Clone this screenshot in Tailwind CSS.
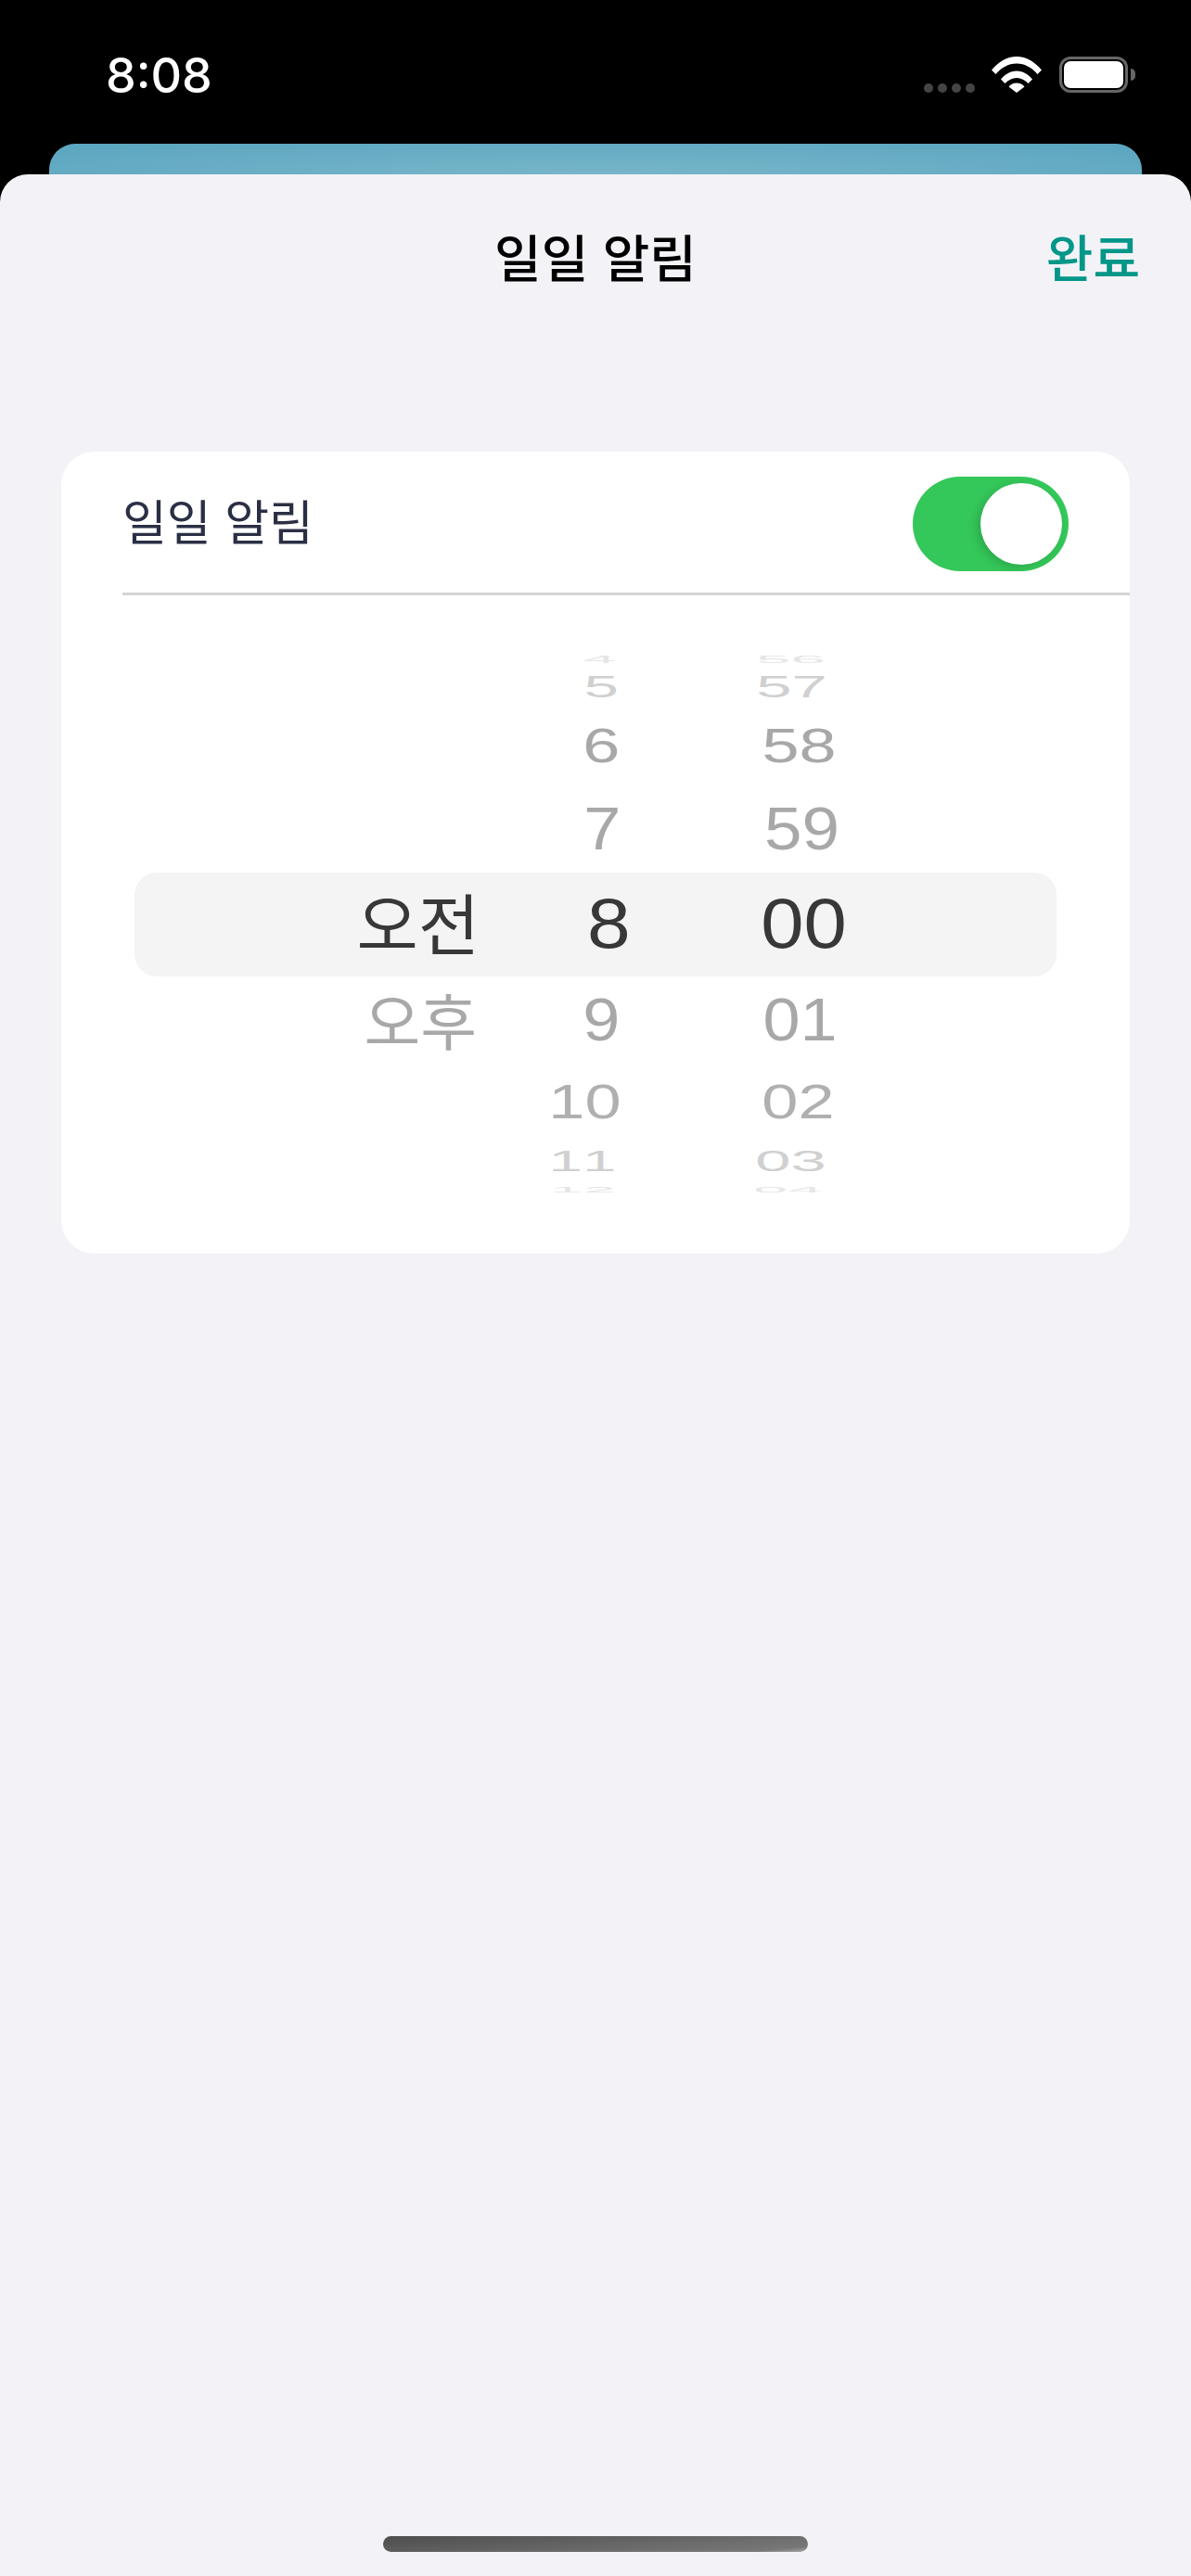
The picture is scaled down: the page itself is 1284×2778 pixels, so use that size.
<!DOCTYPE html>
<html lang="ko">
<head>
<meta charset="utf-8">
<script src="https://cdn.jsdelivr.net/npm/@tailwindcss/browser@4"></script>
</head>
<body class="bg-black">
<div class="w-[1284px] h-[2778px] bg-black flex flex-col overflow-hidden">
  <div class="h-[155px] flex items-start justify-between shrink-0">
    <span class="ml-[114px] mt-[51px] text-[52px] leading-[62px] font-medium text-white font-['Inter',sans-serif]">8:08</span>
    <div class="flex items-end mt-[61px] mr-[68px] h-[39px]">
      <div class="flex gap-[5px] mr-[18px]">
        <span class="w-[10px] h-[10px] rounded-full bg-[#444]"></span>
        <span class="w-[10px] h-[10px] rounded-full bg-[#444]"></span>
        <span class="w-[10px] h-[10px] rounded-full bg-[#444]"></span>
        <span class="w-[10px] h-[10px] rounded-full bg-[#444]"></span>
      </div>
      <svg class="mr-[19px] w-[54px] h-[39px]" viewBox="0 0 54 39" fill="#fff">
        <path d="M0 14.5C7 6 16.5 0 27 0s20 6 27 14.5l-4.5 4.5C43.500 12 36 7.500 27 7.500S10.500 12 4.500 19z"/>
        <path d="M10 24.500C14 19.500 20 15.500 27 15.500s13 4 17 9l-4.500 4.500C36 25.500 32 23 27 23s-9 2.500-12.500 6z"/>
        <path d="M18.500 32.500C20.500 30 23.500 28.500 27 28.500s6.500 1.500 8.500 4L27 39z"/>
      </svg>
      <div class="relative w-[74px] h-[39px] rounded-[12px] border-[3px] border-[#666] p-[2px]">
        <div class="w-full h-full bg-white rounded-[7px]"></div>
        <span class="absolute right-[-11px] top-[10px] w-[5px] h-[13px] bg-[#666] rounded-r-full"></span>
      </div>
    </div>
  </div>
  <div class="h-[33px] mx-[53px] shrink-0 rounded-t-[28px] bg-[radial-gradient(ellipse_at_center_bottom,#78b6c9,#5aa5c0)]"></div>
  <div class="relative flex-1 bg-[#f2f2f7] rounded-t-[30px] px-[66px] font-['Noto_Sans_CJK_KR',sans-serif]">
    <div class="absolute inset-x-0 top-[52px] flex justify-center">
      <span class="text-[55px] leading-[70px] font-medium text-black">일일 알림</span>
    </div>
    <span class="absolute right-[55px] top-[52px] text-[55px] leading-[70px] font-medium text-[#009688]">완료</span>
    <div class="mt-[299px] h-[865px] bg-white rounded-[36px] overflow-hidden relative">
      <div class="h-[155px] ml-[66px] border-b-[3px] border-[#d4d4d4] flex items-center justify-between pr-[66px]">
        <span class="text-[52px] leading-[64px] text-[#2a2f45] mb-[4px]">일일 알림</span>
        <div class="relative w-[168px] h-[102px] rounded-full bg-[#34c759] mt-[3px]">
          <span class="absolute right-[7px] top-[7px] w-[88px] h-[88px] rounded-full bg-white shadow-[-4px_3px_10px_rgba(0,0,0,0.15)]"></span>
        </div>
      </div>
      <div class="absolute left-[79px] top-[454px] w-[994px] h-[112px] rounded-[24px] bg-[#f4f4f4]"></div>
      <div class="relative mt-[58px] flex font-['Liberation_Sans',sans-serif] text-[80px] leading-none">
        <div class="w-[446px] flex flex-col items-end font-['Noto_Sans_CJK_KR',sans-serif]">
          <div class="h-[238px]"></div>
          <div class="h-[116px] flex items-center text-[#383838] text-[72px] mr-[-5px] pb-[6px]">오전</div>
          <div class="h-[92px] flex items-center text-[#a8a8a8] text-[66px] mr-[-2px] pb-[4px]">오후</div>
        </div>
        <div class="w-[158px] flex flex-col items-end tabular-nums">
          <div class="h-[22px] flex items-center overflow-hidden text-[#e6e6e6] mr-[2px]"><span class="block scale-x-[0.8] scale-y-[0.14]">4</span></div>
          <div class="h-[38px] flex items-center text-[#d0d0d0] mr-[0px]"><span class="block scale-x-[0.84] scale-y-[0.41]">5</span></div>
          <div class="h-[90px] flex items-center text-[#a8a8a8] mr-[0px]"><span class="block scale-x-[0.9] scale-y-[0.64]">6</span></div>
          <div class="h-[88px] flex items-center text-[#a8a8a8] mr-[-1px]"><span class="block scale-x-[0.9] scale-y-[0.82]">7</span></div>
          <div class="h-[116px] flex items-center text-[#383838] mr-[-8px]"><span class="block scale-x-[1.05] scale-y-[0.95]">8</span></div>
          <div class="h-[92px] flex items-center text-[#a8a8a8] mr-[0px]"><span class="block scale-x-[0.9] scale-y-[0.82]">9</span></div>
          <div class="h-[86px] flex items-center text-[#b0b0b0] mr-[-5px]"><span class="block scale-x-[0.88] scale-y-[0.64]">10</span></div>
          <div class="h-[40px] flex items-center text-[#d0d0d0] mr-[-8px]"><span class="block scale-x-[0.82] scale-y-[0.4] tracking-[6px]">11</span></div>
          <div class="h-[22px] flex items-center overflow-hidden text-[#e6e6e6] mr-[-3px]"><span class="block scale-x-[0.8] scale-y-[0.12]">12</span></div>
        </div>
        <div class="ml-[148px] flex flex-col items-start tabular-nums">
          <div class="h-[22px] flex items-center overflow-hidden text-[#e6e6e6] ml-[-10px]"><span class="block scale-x-[0.84] scale-y-[0.14]">56</span></div>
          <div class="h-[38px] flex items-center text-[#d0d0d0] ml-[-9px]"><span class="block scale-x-[0.86] scale-y-[0.41]">57</span></div>
          <div class="h-[90px] flex items-center text-[#a8a8a8] ml-[-1px]"><span class="block scale-x-[0.9] scale-y-[0.64]">58</span></div>
          <div class="h-[88px] flex items-center text-[#a8a8a8] ml-[2px]"><span class="block scale-x-[0.91] scale-y-[0.82]">59</span></div>
          <div class="h-[116px] flex items-center text-[#383838] ml-[4px]"><span class="block scale-x-[1.04] scale-y-[0.95]">00</span></div>
          <div class="h-[92px] flex items-center text-[#a8a8a8] ml-[0px]"><span class="block scale-x-[0.9] scale-y-[0.82]">01</span></div>
          <div class="h-[86px] flex items-center text-[#b0b0b0] ml-[-2px]"><span class="block scale-x-[0.88] scale-y-[0.64]">02</span></div>
          <div class="h-[40px] flex items-center text-[#d0d0d0] ml-[-10px]"><span class="block scale-x-[0.86] scale-y-[0.4]">03</span></div>
          <div class="h-[22px] flex items-center overflow-hidden text-[#e6e6e6] ml-[-13px]"><span class="block scale-x-[0.84] scale-y-[0.12]">04</span></div>
        </div>
      </div>
    </div>
    <div class="absolute left-[413px] top-[2547px] w-[458px] h-[17px] rounded-full bg-[linear-gradient(175deg,#4e4e4e_0%,#6e6e6e_70%,#777_90%,#a8a8a8_100%)]"></div>
  </div>
</div>
</body>
</html>
